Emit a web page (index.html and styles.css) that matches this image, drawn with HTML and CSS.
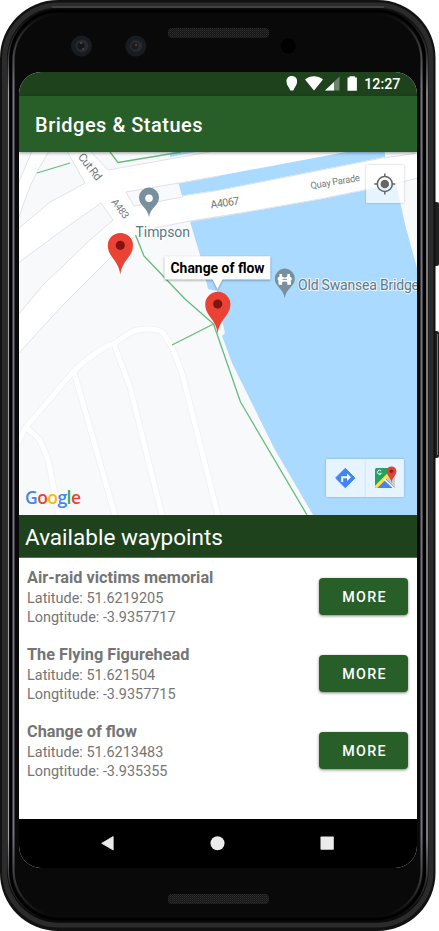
FILE: index.html
```
<!DOCTYPE html>
<html lang="en">
<head>
<meta charset="utf-8">
<title>Bridges &amp; Statues</title>
<link rel="stylesheet" href="styles.css">
</head>
<body>
<div class="phone">
  <svg class="shell" viewBox="0 0 439 931" aria-hidden="true">
    <defs>
      <linearGradient id="rim" x1="0" y1="0" x2="0" y2="1">
        <stop offset="0" stop-color="#858585" stop-opacity="0"/>
        <stop offset=".045" stop-color="#858585" stop-opacity=".35"/>
        <stop offset=".09" stop-color="#a2a2a2"/>
        <stop offset=".91" stop-color="#a2a2a2"/>
        <stop offset=".96" stop-color="#858585" stop-opacity=".3"/>
        <stop offset="1" stop-color="#858585" stop-opacity="0"/>
      </linearGradient>
      <linearGradient id="rim2" x1="0" y1="0" x2="0" y2="1">
        <stop offset="0" stop-color="#74747d" stop-opacity="0"/>
        <stop offset=".08" stop-color="#74747d"/>
        <stop offset=".91" stop-color="#74747d"/>
        <stop offset="1" stop-color="#74747d" stop-opacity="0"/>
      </linearGradient>
      <pattern id="mesh" width="2" height="2" patternUnits="userSpaceOnUse">
        <rect width="2" height="2" fill="#161616"/>
        <rect width="1" height="1" fill="#2e2e2e"/>
        <rect x="1" y="1" width="1" height="1" fill="#242424"/>
      </pattern>
    </defs>
    <rect x="432" y="202" width="7" height="64" rx="2" fill="#222"/>
    <rect x="432" y="331" width="7" height="127" rx="2" fill="#222"/>
    <path d="M437.500 334v121" stroke="#777" stroke-width="1"/>
    <rect x="0" y="0" width="435.500" height="931" rx="58" fill="#111"/>
    <rect x="4.500" y="5" width="426.500" height="920" rx="54" fill="none" stroke="#2b2b2b" stroke-width="5"/>
    <path d="M52 7H384" stroke="#414141" stroke-width="2"/>
    <rect x="7.500" y="8.500" width="420.500" height="914" rx="51" fill="#090909"/>
    <rect x="8.500" y="9.500" width="418.500" height="911" rx="50" fill="none" stroke="url(#rim)" stroke-width="1.500"/>
    <rect x="10.500" y="11" width="414" height="908" rx="48" fill="none" stroke="#000" stroke-width="2.500"/>
    <rect x="13.500" y="13.500" width="408" height="903" rx="47" fill="none" stroke="url(#rim2)" stroke-width="2"/>
    <rect x="168" y="28" width="101" height="10" rx="4" fill="url(#mesh)"/>
    <rect x="168" y="894" width="101" height="10" rx="4" fill="url(#mesh)"/>
    <g>
      <circle cx="81.500" cy="46" r="10.500" fill="#161c22"/><circle cx="82" cy="46" r="6.500" fill="#2a2a2c"/><circle cx="81" cy="46" r="3.500" fill="#161616"/><circle cx="81" cy="43" r=".8" fill="#777"/><circle cx="83" cy="49" r=".8" fill="#666"/>
      <circle cx="135.800" cy="46" r="10.500" fill="#161c22"/><circle cx="136" cy="46" r="6" fill="#2a2a2c"/><circle cx="135" cy="46" r="3.500" fill="#1b1b1b"/><circle cx="136" cy="45" r=".8" fill="#777"/>
      <circle cx="288.300" cy="46" r="7.500" fill="#000"/>
    </g>
  </svg>

  <main class="screen">
    <div class="status">
      <svg class="status-icons" width="71" height="16" viewBox="286 76 71 16" fill="#fff" aria-hidden="true">
        <path d="M291.800 76c3.200 0 5.300 2.200 5.300 5.200 0 2.800-1.300 4.700-2.600 6.700l-1.200 2.700h-3l-1.200-2.700c-1.300-2-2.600-3.900-2.600-6.700 0-3 2.100-5.200 5.300-5.200z"/>
        <path d="M305 79.400c5.400-4.200 12.600-4.200 18 0L314 90.500z"/>
        <path d="M339.500 76.500v14H325z" opacity=".35"/>
        <path d="M334 82v8.500h-9z"/>
        <path d="M349.500 76.200h5.400v1.400h2v13.200h-9.400V77.600h2z"/>
      </svg>
      <span class="clock">12:27</span>
    </div>
    <header class="appbar">Bridges &amp; Statues</header>

    <section class="map">
      <svg class="map-canvas" viewBox="19 152 398 363">
        <rect x="19" y="152" width="398" height="363" fill="#fff"/>
        <g fill="#f8f9fb" stroke="#e0e2e5" stroke-width="1">
          <path d="M18 151h14L18 184z"/>
          <path d="M49 151h18L85 183Q66 194 50 202L18 229v-9Q30 184 37 172z"/>
          <path d="M18 263 60 232 101 203 113 220 90 240 43 285 18 315z"/>
          <path d="M90 151 108 170 215 151z"/>
          <path d="M126 192 179 183 183 197 134 206z"/>
          <path d="M18 354 40 330 63 305 111 257 133 238 155 228 190 221 240 213V340L330 516H18z"/>
          <path d="M384 151v7L418 153v-3zM390 185 418 178V290z"/>
        </g>
        <g fill="#aadaff">
          <path d="M170 154.500V157L196 152H172z"/>
          <path d="M178.500 183 219 175.800 346 152H385V157L219 190 182 195.500z"/>
          <path d="M190 221.500 219 217 319 199.500 396 184 406 228 417 268V515H313L274 448 232 363 222 336 225 333 222 320 217 291 208 289 200 255z"/>
        </g>
        <path d="M178 183.500 219 176M182 196 219 190.300 385 157.500M190 221.300 219 216.800 319 199.200 396 183.500" fill="none" stroke="#dfe3e6" stroke-width="1"/>
        <g fill="none" stroke-linejoin="round">
          <g stroke="#eff0f1" stroke-width="6.500">
            <path id="crescent" d="M17 444 26 427 73 372Q84 360 107 346L114 344Q131 331 137 330Q158 327 164 334L172 347 182 373 219 519"/>
            <path id="lanes" d="M26 427 39 439Q47 453 50 469L60 519M74 372 116 519M114 344 130 387 163 519"/>
          </g>
          <g stroke="#fff" stroke-width="5">
            <use href="#crescent"/><use href="#lanes"/>
          </g>
          <path d="M37 173 70 163M110 152 118 162.500 181 152M135.500 235 144 256 185 299 213.500 324 172 345M213.500 324 217 334 240.500 402 307 515" stroke="#66bc7c" stroke-width="1.300"/>
        </g>
        <g class="road-text">
          <text transform="translate(77.500 157) rotate(52)" font-size="11.500" textLength="31">Cut Rd</text>
          <text transform="translate(111 202) rotate(53)" font-size="10" textLength="22">A483</text>
          <text transform="translate(211 208.500) rotate(-8)" font-size="11" textLength="29">A4067</text>
          <text transform="translate(311 189) rotate(-9.500)" font-size="9.500" textLength="50">Quay Parade</text>
        </g>
        <g class="place-text">
          <text x="135.500" y="236.800" font-size="14" textLength="54.500">Timpson</text>
          <text x="298" y="290" font-size="14" textLength="121">Old Swansea Bridge</text>
        </g>
        <g fill="#78909c">
          <path d="M149 217C147.500 207 139 206 139 197.500a10 10 0 0 1 20 0C159 206 150.500 207 149 217z"/>
          <path d="M284.700 298C283.200 288 274.800 287 274.800 278.500a10 10 0 0 1 20 0C294.800 287 286.200 288 284.700 298z"/>
        </g>
        <circle cx="149" cy="198.300" r="3.800" fill="#fff"/>
        <path d="M279.500 274h2.600v2.500q2.600 2 5.200 0V274h2.600v2.500l1.800 1.200v2.500h-.8v4.500h-3.600v-2.400q-2.600-1.600-5.200 0v2.400h-3.600v-4.500h-.8v-2.500l1.800-1.200z" fill="#fff"/>
        <path d="M282.500 279.300h4.400" stroke="#78909c" stroke-width="1"/>
        <g id="pin">
          <path d="M120.300 274.500C118.500 260 107.800 257 107.800 245.500a12.600 12.600 0 0 1 25.200 0C133 257 122.100 260 120.300 274.500z" fill="#ea4335"/>
          <circle cx="120.300" cy="245.300" r="4.600" fill="#811411"/>
        </g>
        <use href="#pin" x="97.400" y="58.800"/>
        <g class="callout">
          <path d="M164.500 256.300H270.300V279.500H222.500L217.500 289 212.500 279.500H164.500z" fill="#fff"/>
          <text x="170.500" y="273.300" font-size="14" textLength="94" lengthAdjust="spacingAndGlyphs">Change of flow</text>
        </g>
        <g class="google">
          <text x="25" y="503.500" font-size="17.500" textLength="56"><tspan fill="#4285f4">G</tspan><tspan fill="#ea4335">o</tspan><tspan fill="#fbbc05">o</tspan><tspan fill="#4285f4">g</tspan><tspan fill="#34a853">l</tspan><tspan fill="#ea4335">e</tspan></text>
        </g>
      </svg>
      <div class="control locate">
        <svg width="38" height="38" viewBox="366 165 38 38" fill="none" stroke="#666">
          <circle cx="384.800" cy="184" r="7.500" stroke-width="1.600"/>
          <circle cx="384.800" cy="184" r="4.300" fill="#666" stroke="none"/>
          <path d="M384.800 173.500v3.500M384.800 191v3.500M374.200 184h3.500M391.800 184h3.500" stroke-width="1.500"/>
        </svg>
      </div>
      <div class="control links">
        <svg width="78" height="38" viewBox="326 459 78 38">
          <path d="M365.200 459v38" stroke="#d5e4f0" stroke-width="1"/>
          <path d="M345.300 468.300 355 478 345.300 487.700 335.600 478z" fill="#4285f4" stroke="#4285f4" stroke-width="1" stroke-linejoin="round"/>
          <path d="M342.200 482v-4.700h5.500" fill="none" stroke="#fff" stroke-width="1.900"/>
          <path d="M347 473.600 351 477.300 347 481z" fill="#fff"/>
          <clipPath id="tile"><rect x="375" y="468" width="20" height="20" rx="1.500"/></clipPath>
          <g clip-path="url(#tile)">
            <path d="M375 468h20v20h-20z" fill="#1fa463"/>
            <path d="M395 468v20L385 478z" fill="#c9cdd0"/>
            <path d="M375 488 385 478 395 488z" fill="#4285f4"/>
            <path d="M374 489 391 472" stroke="#ffe047" stroke-width="3.200"/>
            <path d="M384 479 395 489" stroke="#fff" stroke-width="1.600"/>
          </g>
          <path d="M381.200 470.900a2.100 2.100 0 1 0 .2 2.400h-1.900" fill="none" stroke="#fff" stroke-width="1"/>
          <path d="M391.500 483C391 477.500 386.600 476 386.600 471.300a4.900 4.900 0 0 1 9.800 0C396.400 476 392 477.500 391.500 483z" fill="#db4437"/>
          <circle cx="391.500" cy="471.300" r="1.700" fill="#7b231c"/>
        </svg>
      </div>
    </section>

    <h2 class="heading">Available waypoints</h2>
    <ul class="list">
      <li class="row">
        <div><h3>Air-raid victims memorial</h3><p>Latitude: 51.6219205</p><p>Longtitude: -3.9357717</p></div>
        <button class="more">MORE</button>
      </li>
      <li class="row">
        <div><h3>The Flying Figurehead</h3><p>Latitude: 51.621504</p><p>Longtitude: -3.9357715</p></div>
        <button class="more">MORE</button>
      </li>
      <li class="row">
        <div><h3>Change of flow</h3><p>Latitude: 51.6213483</p><p>Longtitude: -3.935355</p></div>
        <button class="more">MORE</button>
      </li>
    </ul>
    <nav class="navbar">
      <svg width="398" height="49" viewBox="19 819 398 49" fill="#ececec">
        <path d="M101.700 843.300 113.200 836.500V850z" stroke="#ececec" stroke-width=".8" stroke-linejoin="round"/>
        <circle cx="217.500" cy="843.200" r="7"/>
        <rect x="320.500" y="836.500" width="13.300" height="13.300" rx=".8"/>
      </svg>
    </nav>
  </main>
</div>
</body>
</html>
```
FILE: styles.css
```
* { box-sizing: border-box; }
html, body { margin: 0; background: #fff; }
body { font-family: Roboto, "Liberation Sans", sans-serif; overflow: hidden; }
h2, h3, p, ul { margin: 0; padding: 0; }

.phone {
  position: relative;
  width: 439px;
  height: 931px;
  padding: 72px 22px 63px 19px;
}
.shell { position: absolute; inset: 0; width: 439px; height: 931px; }

.screen {
  position: relative;
  display: flex;
  flex-direction: column;
  height: 796px;
  border-radius: 22px;
  overflow: hidden;
  background: #fff;
}

.status {
  display: flex;
  justify-content: flex-end;
  align-items: center;
  gap: 7px;
  height: 24px;
  flex: none;
  padding-right: 16.5px;
  background: #1e431c;
  color: #fff;
}
.clock { font-size: 14.3px; font-weight: 500; line-height: 24px; }

.appbar {
  position: relative;
  z-index: 1;
  flex: none;
  height: 56px;
  padding-left: 16px;
  background: #285e28;
  color: #fff;
  font-size: 20px;
  font-weight: 500;
  letter-spacing: .5px;
  line-height: 58px;
  box-shadow: 0 1px 3px rgba(0, 0, 0, .4);
}

.map { position: relative; flex: none; height: 363px; }
.map-canvas { display: block; width: 398px; height: 363px; }
.road-text { fill: #70777d; paint-order: stroke; stroke: #fff; stroke-width: 1.5px; }
.place-text { fill: #607985; paint-order: stroke; stroke: rgba(255, 255, 255, .75); stroke-width: 2px; }
.callout path { filter: drop-shadow(0 1px 1px rgba(0, 0, 0, .35)); }
.callout text { font-weight: 700; fill: #000; }
.google { font-family: "Open Sans", Lato, sans-serif; font-weight: 600; }

.control {
  position: absolute;
  height: 38px;
  border-radius: 1px;
  background: rgba(255, 255, 255, .7);
  box-shadow: 0 0 2px rgba(0, 0, 0, .3);
}
.control svg { display: block; }
.locate { top: 13px; right: 13px; width: 38px; }
.links { right: 13px; bottom: 18px; width: 78px; }

.heading {
  flex: none;
  height: 43px;
  padding-left: 6px;
  background: #1e431c;
  color: #fff;
  font-size: 22.5px;
  font-weight: 400;
  line-height: 45px;
  border-bottom: 1px solid #557252;
}

.list { flex: 1; list-style: none; padding: 10px 9px 0 8px; color: #757575; }
.row { display: flex; justify-content: space-between; height: 77px; }
.row h3 { font-size: 16.3px; font-weight: 700; line-height: 20.5px; }
.row p { font-size: 14.45px; line-height: 19.9px; }
.more {
  width: 89px;
  height: 37px;
  margin-top: 10px;
  padding: 2px 0 0 2px;
  border: 0;
  border-radius: 4px;
  background: #285e28;
  color: #fff;
  font: 500 14.3px/35px Roboto, sans-serif;
  letter-spacing: 1.25px;
  box-shadow: 0 1px 3px rgba(0, 0, 0, .5);
}

.navbar { flex: none; height: 49px; background: #000; }
.navbar svg { display: block; }
```
